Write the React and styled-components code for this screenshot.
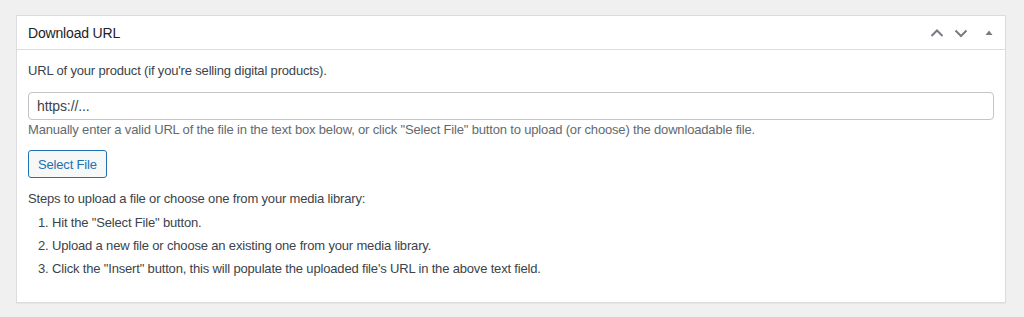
import React from 'react';
import styled, {createGlobalStyle} from 'styled-components';

const steps = [
  'Hit the "Select File" button.',
  'Upload a new file or choose an existing one from your media library.',
  'Click the "Insert" button, this will populate the uploaded file\'s URL in the above text field.',
];

const Global = createGlobalStyle`
  body {
    margin: 0;
    background: #f0f0f1;
    font-family: "Liberation Sans", Arial, sans-serif;
    font-size: 13px;
    letter-spacing: -0.17px;
    color: #3c434a;
  }
`;

const ChevronUp = () => (
  <svg width="20" height="20" viewBox="0 0 20 20">
    <path d="M4.5 13 L10 7.5 L15.5 13" fill="none" stroke="currentColor" strokeWidth="2"/>
  </svg>
);

const ChevronDown = () => (
  <svg width="20" height="20" viewBox="0 0 20 20">
    <path d="M4.5 7.5 L10 13 L15.5 7.5" fill="none" stroke="currentColor" strokeWidth="2"/>
  </svg>
);

const Triangle = () => (
  <svg width="20" height="20" viewBox="0 0 20 20">
    <path d="M6.5 12 L10 7.5 L13.5 12 Z" fill="currentColor"/>
  </svg>
);

const App = () => (
  <>
    <Global/>
    <S.Page>
      <S.Postbox>
        <S.Header>
          <S.Title>Download URL</S.Title>
          <S.Actions>
            <S.HandleButton><ChevronUp/></S.HandleButton>
            <S.HandleButton><ChevronDown/></S.HandleButton>
            <S.HandleButton $wide><Triangle/></S.HandleButton>
          </S.Actions>
        </S.Header>
        <S.Inside>
          <S.Para>URL of your product (if you're selling digital products).</S.Para>
          <S.Input type="text" placeholder="https://..."/>
          <S.Help>
            Manually enter a valid URL of the file in the text box below, or click "Select File" button to upload (or choose) the downloadable file.
          </S.Help>
          <S.Button>Select File</S.Button>
          <S.Para>Steps to upload a file or choose one from your media library:</S.Para>
          <S.Steps>
            {steps.map(s => <S.Step key={s}>{s}</S.Step>)}
          </S.Steps>
        </S.Inside>
      </S.Postbox>
    </S.Page>
  </>
);

const S = {};

S.Page = styled.div`
  padding: 15px 18px 15px 16px;
`;

S.Postbox = styled.div`
  background: #fff;
  border: 1px solid #dcdcde;
  box-shadow: 0 1px 1px rgba(0,0,0,.04);
`;

S.Header = styled.div`
  display: flex;
  align-items: center;
  justify-content: space-between;
  height: 33px;
  border-bottom: 1px solid #dcdcde;
  padding-left: 11px;
`;

S.Title = styled.h2`
  margin: 0;
  font-size: 14px;
  font-weight: 400;
  color: #1d2327;
`;

S.Actions = styled.div`
  display: flex;
  align-items: center;
  color: #787c82;
`;

S.HandleButton = styled.span`
  display: flex;
  align-items: center;
  justify-content: center;
  width: ${p => p.$wide ? '32px' : '24px'};
  height: 33px;
`;

S.Inside = styled.div`
  padding: 0 11px 24px;
`;

S.Para = styled.p`
  margin: 11px 0;
  line-height: 19.5px;
`;

S.Input = styled.input`
  display: block;
  box-sizing: border-box;
  width: 100%;
  height: 28px;
  padding: 0 8px;
  border: 1px solid #c3c4c7;
  border-radius: 4px;
  font-family: inherit;
  font-size: 14px;
  letter-spacing: -0.1px;
  color: #2c3338;
  &::placeholder { color: #3c434a; }
`;

S.Help = styled.p`
  margin: 0;
  line-height: 19.5px;
  color: #646970;
`;

S.Button = styled.button`
  display: block;
  margin-top: 11px;
  box-sizing: border-box;
  height: 28px;
  padding: 0 9px;
  font-family: inherit;
  font-size: 13px;
  letter-spacing: -0.17px;
  color: #2271b1;
  background: #f6f7f7;
  border: 1px solid #2271b1;
  border-radius: 3px;
`;

S.Steps = styled.ol`
  margin: -7px 0 0;
  padding-left: 24px;
`;

S.Step = styled.li`
  line-height: 19px;
  margin-bottom: 4px;
  &:last-child { margin-bottom: 0; }
`;

export default App;
